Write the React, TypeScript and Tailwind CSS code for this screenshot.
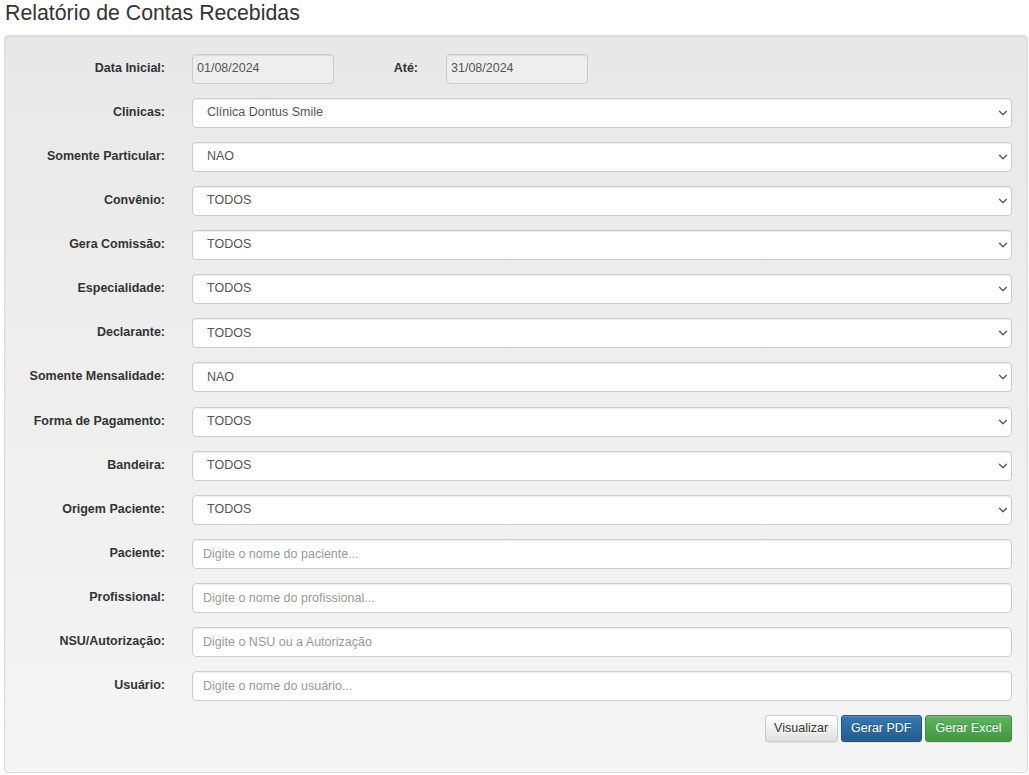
import React from "react";

const selects: { label: string; value: string }[] = [
  { label: "Clinicas:", value: "Clínica Dontus Smile" },
  { label: "Somente Particular:", value: "NAO" },
  { label: "Convênio:", value: "TODOS" },
  { label: "Gera Comissão:", value: "TODOS" },
  { label: "Especialidade:", value: "TODOS" },
  { label: "Declarante:", value: "TODOS" },
  { label: "Somente Mensalidade:", value: "NAO" },
  { label: "Forma de Pagamento:", value: "TODOS" },
  { label: "Bandeira:", value: "TODOS" },
  { label: "Origem Paciente:", value: "TODOS" },
];

const textFields: { label: string; placeholder: string }[] = [
  { label: "Paciente:", placeholder: "Digite o nome do paciente..." },
  { label: "Profissional:", placeholder: "Digite o nome do profissional..." },
  { label: "NSU/Autorização:", placeholder: "Digite o NSU ou a Autorização" },
  { label: "Usuário:", placeholder: "Digite o nome do usuário..." },
];

function Label({ children, className = "" }: { children: React.ReactNode; className?: string }) {
  return (
    <label className={`shrink-0 pt-[6px] text-right text-[12.5px] font-bold leading-[17px] text-[#333] ${className}`}>
      {children}
    </label>
  );
}

function SelectField({ value }: { value: string }) {
  return (
    <div className="relative flex-1">
      <select
        defaultValue={value}
        className="block h-[30px] w-full appearance-none rounded-[4px] border border-[#ccc] bg-white pb-[1px] pl-[14px] pr-6 text-[12.5px] text-[#555] shadow-[inset_0_1px_1px_rgba(0,0,0,0.075)] outline-none"
      >
        <option>{value}</option>
      </select>
      {/* seta do select */}
      <svg
        className="pointer-events-none absolute right-[4px] top-[12px]"
        width="10"
        height="6"
        viewBox="0 0 10 6"
        fill="none"
      >
        <path d="M1.5 1.2l3.5 3.5 3.5-3.5" stroke="#555" strokeWidth="1.3" strokeLinecap="round" strokeLinejoin="round" />
      </svg>
    </div>
  );
}

export default function App() {
  return (
    <main
      className="min-h-screen bg-white text-[#333]"
      style={{ fontFamily: '"Liberation Sans", Arial, Helvetica, sans-serif' }}
    >
      <h1 className="pl-[5px] pt-[2px] text-[21.3px] font-normal leading-[23px] text-[#333]">
        Relatório de Contas Recebidas
      </h1>

      {/* Well com o formulário */}
      <div className="ml-[4px] mr-[1px] mt-[10px] rounded-[4px] border border-[#dcdcdc] bg-gradient-to-b from-[#e8e8e8] to-[#f5f5f5] pb-[30px] pr-[15px] pt-[18px] shadow-[inset_0_1px_3px_rgba(0,0,0,0.05)]">
        <div className="flex flex-col gap-[14.07px]">
          {/* Datas */}
          <div className="flex items-start">
            <Label className="w-[160px]">Data Inicial:</Label>
            <input
              readOnly
              value="01/08/2024"
              className="ml-[27px] h-[30px] w-[142px] rounded-[4px] border border-[#ccc] bg-[#eee] pb-[2px] pl-[4px] text-[12.5px] text-[#555] shadow-[inset_0_1px_1px_rgba(0,0,0,0.075)] outline-none"
            />
            <Label className="w-[84px]">Até:</Label>
            <input
              readOnly
              value="31/08/2024"
              className="ml-[28px] h-[30px] w-[142px] rounded-[4px] border border-[#ccc] bg-[#eee] pb-[2px] pl-[4px] text-[12.5px] text-[#555] shadow-[inset_0_1px_1px_rgba(0,0,0,0.075)] outline-none"
            />
          </div>

          {selects.map((s) => (
            <div key={s.label} className="flex items-start gap-[27px]">
              <Label className="w-[160px]">{s.label}</Label>
              <SelectField value={s.value} />
            </div>
          ))}

          {textFields.map((f) => (
            <div key={f.label} className="flex items-start gap-[27px]">
              <Label className="w-[160px]">{f.label}</Label>
              <input
                placeholder={f.placeholder}
                className="h-[30px] flex-1 rounded-[4px] border border-[#ccc] bg-white pl-[10px] text-[12.5px] text-[#555] shadow-[inset_0_1px_1px_rgba(0,0,0,0.075)] outline-none placeholder:text-[#999]"
              />
            </div>
          ))}

          {/* Botões */}
          <div className="flex justify-end gap-[3.5px]">
            <button className="h-[27px] rounded-[3px] border border-[#ccc] bg-gradient-to-b from-white to-[#e0e0e0] px-[8.5px] text-[12.5px] text-[#333] shadow-[inset_0_1px_0_rgba(255,255,255,0.15),0_1px_1px_rgba(0,0,0,0.075)] [text-shadow:0_1px_0_#fff]">
              Visualizar
            </button>
            <button className="h-[27px] rounded-[3px] border border-[#245580] bg-gradient-to-b from-[#337ab7] to-[#265a88] px-[9px] text-[12.5px] text-white shadow-[inset_0_1px_0_rgba(255,255,255,0.15),0_1px_1px_rgba(0,0,0,0.075)] [text-shadow:0_-1px_0_rgba(0,0,0,0.2)]">
              Gerar PDF
            </button>
            <button className="h-[27px] rounded-[3px] border border-[#3e8f3e] bg-gradient-to-b from-[#5cb85c] to-[#419641] px-[9.5px] text-[12.5px] text-white shadow-[inset_0_1px_0_rgba(255,255,255,0.15),0_1px_1px_rgba(0,0,0,0.075)] [text-shadow:0_-1px_0_rgba(0,0,0,0.2)]">
              Gerar Excel
            </button>
          </div>
        </div>
      </div>
    </main>
  );
}
